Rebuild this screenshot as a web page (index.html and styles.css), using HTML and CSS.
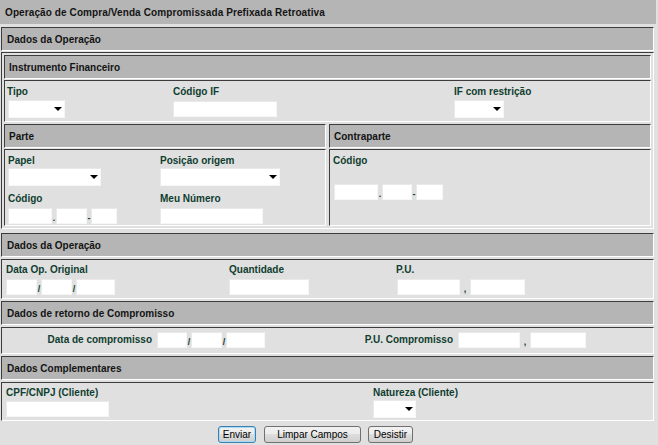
FILE: index.html
```html
<!DOCTYPE html>
<html lang="pt-BR">
<head>
<meta charset="utf-8">
<title>Operação de Compra/Venda Compromissada Prefixada Retroativa</title>
<link rel="stylesheet" href="styles.css">
</head>
<body>
<div class="title">Operação de Compra/Venda Compromissada Prefixada Retroativa</div>
<div class="box head main-head">Dados da Operação</div>

<div class="box group">
  <div class="box head sub-head">Instrumento Financeiro</div>
  <div class="box cell if-cell">
    <div class="fcol"><span class="lbl">Tipo</span><span class="sel s-tipo"></span></div>
    <div class="fcol"><span class="lbl">Código IF</span><input type="text" class="inp w-codif"></div>
    <div class="fcol"><span class="lbl">IF com restrição</span><span class="sel s-ifr"></span></div>
  </div>
  <div class="pair">
    <div class="half">
      <div class="box head sub-head">Parte</div>
      <div class="box cell parte-cell">
        <div class="fcol"><span class="lbl">Papel</span><span class="sel s-papel"></span></div>
        <div class="fcol"><span class="lbl">Posição origem</span><span class="sel s-pos"></span></div>
        <div class="fcol row2"><span class="lbl">Código</span>
          <div class="inline"><input type="text" class="inp w44"><span class="sep">.</span><input type="text" class="inp w31"><span class="sep">-</span><input type="text" class="inp w26"></div>
        </div>
        <div class="fcol row2"><span class="lbl">Meu Número</span><input type="text" class="inp w103"></div>
      </div>
    </div>
    <div class="half">
      <div class="box head sub-head">Contraparte</div>
      <div class="box cell contra-cell">
        <span class="lbl">Código</span>
        <div class="inline contra-inputs"><input type="text" class="inp w44"><span class="sep">.</span><input type="text" class="inp w30"><span class="sep">-</span><input type="text" class="inp w27"></div>
      </div>
    </div>
  </div>
</div>

<div class="lower">
  <div class="box head">Dados da Operação</div>
  <div class="box cell op-cell">
    <div class="fcol"><span class="lbl">Data Op. Original</span>
      <div class="inline"><input type="text" class="inp w31"><span class="sep">/</span><input type="text" class="inp w31"><span class="sep">/</span><input type="text" class="inp w39"></div>
    </div>
    <div class="fcol"><span class="lbl">Quantidade</span><input type="text" class="inp w80"></div>
    <div class="fcol"><span class="lbl">P.U.</span>
      <div class="inline pu"><input type="text" class="inp w63"><span class="sep wide">,</span><input type="text" class="inp w55"></div>
    </div>
  </div>
  <div class="box head">Dados de retorno de Compromisso</div>
  <div class="box cell ret-cell">
    <span class="lbl rlbl1">Data de compromisso</span>
    <input type="text" class="inp w30"><span class="sep">/</span><input type="text" class="inp w31"><span class="sep">/</span><input type="text" class="inp w39">
    <span class="lbl rlbl2">P.U. Compromisso</span>
    <input type="text" class="inp w62"><span class="sep wide">,</span><input type="text" class="inp w56">
  </div>
  <div class="box head">Dados Complementares</div>
  <div class="box cell comp-cell">
    <div class="fcol"><span class="lbl">CPF/CNPJ (Cliente)</span><input type="text" class="inp w103 cpf"></div>
    <div class="fcol"><span class="lbl">Natureza (Cliente)</span><span class="sel s-nat"></span></div>
  </div>
</div>

<div class="buttons">
  <button type="button" class="btn focus b-enviar">Enviar</button>
  <button type="button" class="btn b-limpar">Limpar Campos</button>
  <button type="button" class="btn b-desistir">Desistir</button>
</div>
</body>
</html>
```

FILE: styles.css
```css
html, body {
  margin: 0;
  padding: 0;
  background: #e0e0e0;
}
body {
  font-family: "Liberation Sans", Arial, sans-serif;
  font-size: 10px;
  font-weight: bold;
  line-height: 12px;
  color: #141414;
}
.title {
  box-sizing: border-box;
  width: 656px;
  height: 24px;
  background: #b5b5b5;
  padding: 2px 0 0 5px;
  display: flex;
  align-items: center;
  letter-spacing: 0.1px;
}
.box {
  box-sizing: border-box;
  border: 1px solid;
  border-color: #3c3c3c #ffffff #ffffff #3c3c3c;
}
.head {
  height: 24px;
  background: #b5b5b5;
  display: flex;
  align-items: center;
  padding: 2px 0 0 5px;
}
.main-head {
  margin: 3px 0 0 1px;
  width: 653px;
}
.group {
  margin: 1px 0 0 1px;
  width: 653px;
  padding: 2px;
}
.sub-head {
  padding-left: 4px;
}
.cell {
  background: #e0e0e0;
}
.lbl {
  display: block;
  color: #0f3d2f;
  white-space: nowrap;
}
.fcol {
  display: flex;
  flex-direction: column;
  align-items: flex-start;
}
.inline {
  display: flex;
  align-items: flex-end;
}
.sep {
  width: 4px;
  text-align: center;
  color: #0f3d2f;
  line-height: 12px;
  font-size: 9px;
}
.sep.wide {
  width: 10px;
}

/* inputs */
.inp {
  box-sizing: border-box;
  height: 16px;
  margin: 0;
  padding: 0;
  background: #ffffff;
  border: 1px solid;
  border-color: #e9e9e9 #f6f6f6 #f6f6f6 #e9e9e9;
  outline: none;
}
.w26 { width: 26px; }
.w27 { width: 27px; }
.w30 { width: 30px; }
.w31 { width: 31px; }
.w39 { width: 39px; }
.w44 { width: 44px; }
.w55 { width: 55px; }
.w56 { width: 56px; }
.w62 { width: 62px; }
.w63 { width: 63px; }
.w80 { width: 80px; }
.w103 { width: 103px; }
.w-codif { width: 104px; margin-top: 3px; }

/* selects */
.sel {
  box-sizing: border-box;
  position: relative;
  display: block;
  height: 18px;
  background: #ffffff;
  border: 1px solid;
  border-color: #e9e9e9 #f6f6f6 #f6f6f6 #e9e9e9;
}
.sel::after {
  content: "";
  position: absolute;
  right: 2px;
  top: 6px;
  border-left: 4px solid transparent;
  border-right: 4px solid transparent;
  border-top: 4px solid #000;
}
.s-tipo { width: 57px; margin: 2px 0 0 1px; }
.s-ifr { width: 50px; margin-top: 2px; }
.s-papel { width: 93px; margin-top: 1px; }
.s-pos { width: 120px; margin-top: 1px; }
.s-nat { width: 43px; margin-top: 1px; }

/* Instrumento */
.if-cell {
  margin-top: 1px;
  height: 42px;
  padding: 5px 0 0 2px;
  display: grid;
  grid-template-columns: 166px 281px 1fr;
}

/* Parte / Contraparte */
.pair {
  display: flex;
  gap: 3px;
  margin-top: 2px;
}
.half {
  width: 322px;
}
.parte-cell {
  margin-top: 1px;
  height: 77px;
  padding: 5px 0 0 3px;
  display: grid;
  grid-template-columns: 152px 1fr;
  grid-template-rows: auto auto;
}
.parte-cell .row2 {
  margin-top: 6px;
}
.parte-cell .row2 .inline,
.parte-cell .row2 .inp {
  margin-top: 3px;
}
.parte-cell .row2 .inline .inp {
  margin-top: 0;
}
.contra-cell {
  margin-top: 1px;
  height: 77px;
  padding: 5px 0 0 3px;
}
.contra-inputs {
  margin: 17px 0 0 1px;
}

/* lower table */
.lower {
  margin: 4px 0 0 1px;
  width: 653px;
  display: flex;
  flex-direction: column;
  gap: 2px;
}
.op-cell {
  height: 40px;
  padding: 4px 0 0 4px;
  display: grid;
  grid-template-columns: 223px 167px 1fr;
}
.op-cell .inline,
.op-cell .inp {
  margin-top: 3px;
}
.op-cell .inline .inp {
  margin-top: 0;
}
.op-cell .pu {
  margin-left: 1px;
}
.ret-cell {
  height: 27px;
  padding: 4px 0 0 0;
  display: flex;
  align-items: flex-start;
}
.ret-cell .lbl {
  text-align: right;
  margin-top: 2px;
}
.rlbl1 {
  width: 150px;
  margin-right: 5px;
}
.rlbl2 {
  width: 188px;
  margin-right: 5px;
}
.ret-cell .sep {
  margin-top: 4px;
}
.comp-cell {
  height: 39px;
  padding: 4px 0 0 4px;
  display: grid;
  grid-template-columns: 367px 1fr;
}
.cpf {
  margin-top: 2px;
}

/* buttons */
.buttons {
  display: flex;
  margin-top: 5px;
  padding-left: 218px;
}
.btn {
  box-sizing: border-box;
  height: 17px;
  padding: 0;
  margin: 0;
  font-family: "Liberation Sans", Arial, sans-serif;
  font-size: 10px;
  font-weight: normal;
  line-height: 14px;
  color: #000;
  border: 1px solid #707070;
  border-radius: 3px;
  background: linear-gradient(#f2f2f2 0%, #ebebeb 50%, #dddddd 50%, #cfcfcf 100%);
}
.btn.focus {
  border-color: #3c7fb1;
  box-shadow: inset 0 0 0 1px #a8dcf5;
}
.b-enviar { width: 38px; margin-right: 8px; }
.b-limpar { width: 97px; margin-right: 7px; }
.b-desistir { width: 45px; }
```
